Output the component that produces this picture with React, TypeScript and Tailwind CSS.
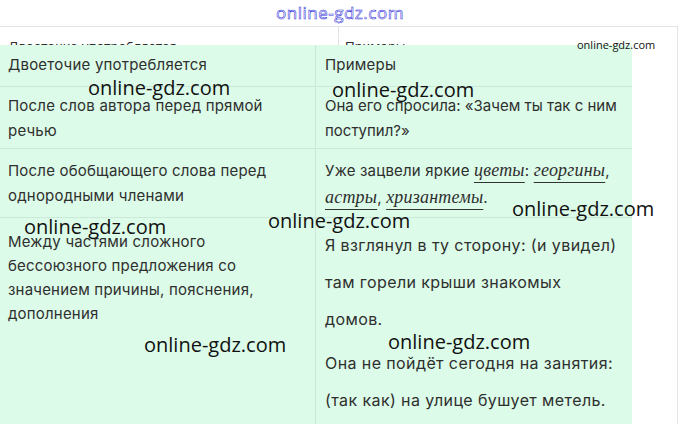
const marks = [
  { x: 88, y: 76 },
  { x: 332, y: 78 },
  { x: 24, y: 215 },
  { x: 268, y: 209 },
  { x: 512, y: 197 },
  { x: 144, y: 333 },
  { x: 388, y: 330 },
];

function Word({ children }: { children: React.ReactNode }) {
  return (
    <span className="font-['Liberation_Serif',serif] italic text-[18px] underline decoration-[#333] underline-offset-[6px]">
      {children}
    </span>
  );
}

export default function App() {
  return (
    <div className="relative w-[680px] h-[424px] overflow-hidden bg-white font-['Inter',sans-serif] text-[#2f2f2f]">
      <div className="h-[26px] flex justify-center items-center">
        <span className="font-['Open_Sans',sans-serif] text-[17px] text-white [-webkit-text-stroke:0.55px_#3030d8] tracking-[0.5px]">
          online-gdz.com
        </span>
      </div>

      <div className="w-[678px] border-t border-r border-[#e4e4e4] h-[398px]">
        <div className="h-[18px] overflow-hidden grid grid-cols-[339px_1fr]">
          <div className="border-r border-[#e4e4e4] px-2 pt-[14px] text-[13px] leading-none">
            Двоеточие употребляется
          </div>
          <div className="px-[6px] pt-[14px] text-[13px] leading-none">Примеры</div>
        </div>

        <div className="w-[632px] bg-[#dcfbe8] text-[15px] tracking-[0.2px]">
          <div className="grid grid-cols-[316px_1fr] h-[42px] border-b border-[#cbe9d8] items-center">
            <div className="px-2 border-r border-[#cbe9d8] h-full flex items-center">Двоеточие употребляется</div>
            <div className="px-[9px]">Примеры</div>
          </div>
          <div className="grid grid-cols-[316px_1fr] h-[62px] border-b border-[#cbe9d8] leading-[25px]">
            <div className="px-2 pt-[6px] border-r border-[#cbe9d8]">
              После слов автора перед прямой
              <br />
              речью
            </div>
            <div className="px-[9px] pt-[6px] tracking-normal">
              Она его спросила: «Зачем ты так с ним
              <br />
              поступил?»
            </div>
          </div>
          <div className="grid grid-cols-[316px_1fr] h-[69px] border-b border-[#cbe9d8] leading-[25px]">
            <div className="px-2 pt-[9px] border-r border-[#cbe9d8]">
              После обобщающего слова перед
              <br />
              однородными членами
            </div>
            <div className="px-[9px] pt-[8px] leading-[27px]">
              Уже зацвели яркие <Word>цветы</Word>: <Word>георгины</Word>,
              <br />
              <Word>астры</Word>, <Word>хризантемы</Word>.
            </div>
          </div>
          <div className="grid grid-cols-[316px_1fr] h-[210px]">
            <div className="px-2 pt-[12px] border-r border-[#cbe9d8] leading-[24px]">
              Между частями сложного
              <br />
              бессоюзного предложения со
              <br />
              значением причины, пояснения,
              <br />
              дополнения
            </div>
            <div className="px-[9px] pt-[9px] leading-[37px] text-[16px] tracking-[0.4px]">
              <p>
                Я взглянул в ту сторону: (и увидел)
                <br />
                там горели крыши знакомых
                <br />
                домов.
              </p>
              <p className="mt-[7px]">
                Она не пойдёт сегодня на занятия:
                <br />
                (так как) на улице бушует метель.
              </p>
            </div>
          </div>
        </div>
      </div>

      {marks.map((m, i) => (
        <span
          key={i}
          className="absolute font-['Open_Sans',sans-serif] text-[20px] leading-[24px] text-[#111] whitespace-nowrap"
          style={{ left: m.x, top: m.y }}
        >
          online-gdz.com
        </span>
      ))}
      <span className="absolute left-[577px] top-[38px] font-['Open_Sans',sans-serif] text-[11px] leading-[14px] text-[#111]">
        online-gdz.com
      </span>
    </div>
  );
}
